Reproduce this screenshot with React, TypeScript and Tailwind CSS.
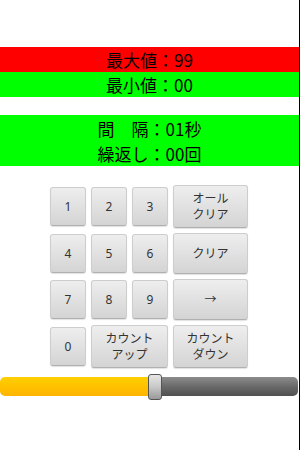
import React from 'react';

const FONT = { fontFamily: '"Noto Sans", "Noto Sans CJK JP", sans-serif' };
const CJK = { fontFamily: '"Noto Sans CJK JP", "Noto Sans", sans-serif' };

function Key({ label, wide, span }: { label: string[]; wide?: boolean; span?: boolean }) {
  return (
    <div className={`flex items-center ${span ? 'col-span-2' : ''}`}>
      <button
        className={`w-full ${wide ? 'h-full' : 'h-[39px]'} rounded-[3px] border border-[#cdcdcd] border-b-[#b0b0b0] bg-gradient-to-b from-[#eeeeee] to-[#d4d4d4] text-[#333] text-[12px] shadow-[0_1px_1px_rgba(0,0,0,0.12)] flex flex-col items-center justify-center text-center`}
      >
        {label.map((l) => (
          <span key={l} className="block leading-[16px] h-[16px]">{l}</span>
        ))}
      </button>
    </div>
  );
}

export default function App() {
  return (
    <div className="w-[300px] h-[450px] bg-white flex flex-col border-r border-black" style={FONT}>
      <div className="h-[47px]" />
      <div className="h-[25px] bg-[#ff0000] flex items-center justify-center text-[17px] text-black" style={CJK}>最大値：99</div>
      <div className="h-[25px] bg-[#00ff00] flex items-center justify-center text-[17px] text-black" style={CJK}>最小値：00</div>
      <div className="h-[18px]" />
      <div className="h-[51px] bg-[#00ff00] flex flex-col justify-center items-center text-[17px] leading-[25px] text-black" style={CJK}>
        <div>間　隔：01秒</div>
        <div>繰返し：00回</div>
      </div>
      <div className="h-[19px]" />
      <div className="pl-[50px] grid grid-cols-[36px_36px_36px_75px] grid-rows-[43px_41px_41px_43px] gap-[5px]">
        <Key label={['1']} />
        <Key label={['2']} />
        <Key label={['3']} />
        <Key wide label={['オール', 'クリア']} />
        <Key label={['4']} />
        <Key label={['5']} />
        <Key label={['6']} />
        <Key wide label={['クリア']} />
        <Key label={['7']} />
        <Key label={['8']} />
        <Key label={['9']} />
        <Key wide label={['→']} />
        <Key label={['0']} />
        <Key wide span label={['カウント', 'アップ']} />
        <Key wide label={['カウント', 'ダウン']} />
      </div>
      <div className="h-[6px]" />
      <div className="relative h-[26px] w-[298px]">
        <div className="absolute left-0 right-0 top-[3px] h-[19px] rounded-[5px] overflow-hidden flex">
          <div className="w-[152px] h-full bg-gradient-to-b from-[#ffcf00] to-[#ffb400]" />
          <div className="flex-1 h-full bg-gradient-to-b from-[#8c8c8c] via-[#6a6a6a] to-[#505050]" />
        </div>
        <div className="absolute left-[148px] top-0 w-[14px] h-[26px] rounded-[3px] border border-[#555] bg-gradient-to-b from-[#e6e6e6] via-[#c8c8c8] to-[#9a9a9a]" />
      </div>
    </div>
  );
}
